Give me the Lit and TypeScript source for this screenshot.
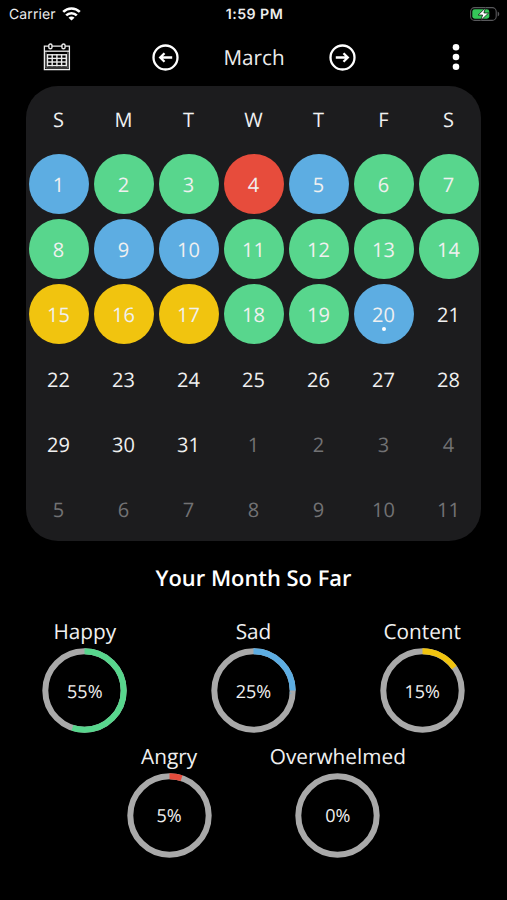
import { LitElement, html, svg, css, nothing } from "lit";
import { customElement, property } from "lit/decorators.js";
import { classMap } from "lit/directives/class-map.js";

type Mood = "happy" | "sad" | "content" | "angry" | "overwhelmed";

const WEEKDAYS = ["S", "M", "T", "W", "T", "F", "S"];
const TODAY = 20;
const DAYS_IN_MONTH = 31;
const MOODS: Mood[] = [
  "sad", "happy", "happy", "angry", "sad", "happy", "happy",
  "happy", "sad", "sad", "happy", "happy", "happy", "happy",
  "content", "content", "content", "happy", "happy", "sad",
];
const SUMMARY: { label: string; mood: Mood; percent: number }[][] = [
  [
    { label: "Happy", mood: "happy", percent: 55 },
    { label: "Sad", mood: "sad", percent: 25 },
    { label: "Content", mood: "content", percent: 15 },
  ],
  [
    { label: "Angry", mood: "angry", percent: 5 },
    { label: "Overwhelmed", mood: "overwhelmed", percent: 0 },
  ],
];

@customElement("status-bar")
class StatusBar extends LitElement {
  static styles = css`
    :host {
      display: grid;
      grid-template-columns: 1fr auto 1fr;
      align-items: center;
      height: 27px;
      padding: 0 7px 0 9px;
      box-sizing: border-box;
      font-family: Inter, "Liberation Sans", sans-serif;
      font-size: 14px;
      line-height: 27px;
      color: #ececec;
    }
    .carrier { display: flex; align-items: center; gap: 6px; letter-spacing: 0.1px; }
    .carrier span, .time { line-height: 26px; padding-top: 2px; }
    .time { font-size: 14.2px; font-weight: 600; letter-spacing: 0.45px; }
    .battery { justify-self: end; }
    svg { display: block; }
  `;
  render() {
    return html`
      <div class="carrier">
        <span>Carrier</span>
        <svg width="19" height="14" viewBox="0 0 19 14" fill="none" stroke="#fff" stroke-width="2.6">
          <path d="M1.2 4.9a11.8 11.8 0 0 1 16.6 0" />
          <path d="M4.2 8.4a7.5 7.5 0 0 1 10.6 0" />
          <path d="M9.5 13.6L6.5 10.8a4.2 4.2 0 0 1 6 0z" fill="#fff" stroke="none" />
        </svg>
      </div>
      <div class="time">1:59 PM</div>
      <svg class="battery" width="30" height="14" viewBox="0 0 30 14">
        <rect x="0.6" y="0.6" width="25.6" height="12.8" rx="4" fill="none" stroke="#59595c" stroke-width="1.1" />
        <rect x="2.3" y="2.3" width="17" height="9.4" rx="2.4" fill="#35c759" />
        <path d="M27.7 4.6a2.6 2.6 0 0 1 0 4.8z" fill="#59595c" />
        <path d="M15.4 0.9L8.2 8h4.4l-1.8 5.4L18.6 6h-4.7z" fill="#fff" stroke="#000" stroke-width="0.7" />
      </svg>
    `;
  }
}

@customElement("month-header")
class MonthHeader extends LitElement {
  static styles = css`
    :host {
      display: grid;
      grid-template-columns: 102px 1fr 102px;
      align-items: center;
      height: 59px;
      padding-top: 1px;
      box-sizing: border-box;
      color: #fff;
    }
    .side { display: flex; justify-content: center; }
    .left { padding-left: 11px; }
    .picker { display: flex; align-items: center; justify-content: center; gap: 44.5px; padding-left: 1px; }
    .month { font-size: 20.7px; line-height: 30px; padding-top: 1px; color: #ededed; }
    svg { display: block; }
  `;
  render() {
    const lines = [0, 1, 2, 3, 4].map((i) => svg`<path d="M${4.5 + i * 4.7} 11.3v12" />`);
    const rows = [0, 1, 2, 3].map((i) => svg`<path d="M3.9 ${11.8 + i * 3.6}h20" />`);
    return html`
      <div class="side left">
        <svg width="28" height="28" viewBox="0 0 28 28" fill="none" stroke="#ececec">
          <path d="M5.7 3.1H1.4v23.5h25V3.1h-4.2M8.8 3.1h10.4" stroke-width="1.3" />
          <path d="M1.4 8.2h25" stroke-width="1.3" />
          <path d="M2.9 9v16h22V9" stroke-width="0.8" stroke="#8a8a8a" />
          <rect x="5.8" y="1" width="3.2" height="4.8" rx="1.6" stroke-width="1.4" />
          <rect x="18.9" y="1" width="3.2" height="4.8" rx="1.6" stroke-width="1.4" />
          <g stroke-width="1.4">${lines}${rows}</g>
        </svg>
      </div>
      <div class="picker">
        <svg width="27" height="27" viewBox="0 0 27 27" fill="none" stroke="#fff" stroke-width="2.3">
          <circle cx="13.5" cy="13.5" r="12" />
          <path d="M20.2 13.5H8.6M12.5 9.2L8.2 13.5l4.3 4.3" />
        </svg>
        <span class="month">March</span>
        <svg width="27" height="27" viewBox="0 0 27 27" fill="none" stroke="#fff" stroke-width="2.3">
          <circle cx="13.5" cy="13.5" r="12" />
          <path d="M6.8 13.5h11.6M14.5 9.2l4.3 4.3-4.3 4.3" />
        </svg>
      </div>
      <div class="side">
        <svg width="8" height="28" viewBox="0 0 8 28" fill="#fff">
          <circle cx="4" cy="4.2" r="3.3" />
          <circle cx="4" cy="14" r="3.3" />
          <circle cx="4" cy="23.7" r="3.3" />
        </svg>
      </div>
    `;
  }
}

@customElement("mood-calendar")
class MoodCalendar extends LitElement {
  static styles = css`
    :host {
      display: grid;
      grid-template-columns: repeat(7, 65px);
      grid-auto-rows: 65.07px;
      width: 455px;
      border-radius: 32px;
      background: #1c1c1e;
      color: #f0f0f0;
      font-size: 20px;
      line-height: 28px;
    }
    .cell { display: flex; align-items: center; justify-content: center; }
    .weekday { padding-top: 2px; }
    .day {
      position: relative;
      display: flex;
      align-items: center;
      justify-content: center;
      width: 60px;
      height: 60px;
      padding-top: 2px;
      box-sizing: border-box;
      border-radius: 50%;
    }
    .happy { background: #58d68d; }
    .sad { background: #5dade2; }
    .content { background: #f1c40f; }
    .angry { background: #e74c3c; }
    .outside { color: #727274; }
    .today::after {
      content: "";
      position: absolute;
      left: 28px;
      bottom: 13px;
      width: 4px;
      height: 4px;
      border-radius: 50%;
      background: #fff;
    }
  `;
  render() {
    const cells = Array.from({ length: 42 }, (_, i) => {
      const day = i + 1;
      const mood = MOODS[i];
      const classes: Record<string, boolean> = {
        day: true,
        outside: day > DAYS_IN_MONTH,
        today: day === TODAY,
      };
      if (mood) classes[mood] = true;
      const shown = day > DAYS_IN_MONTH ? day - DAYS_IN_MONTH : day;
      return html`<div class="cell"><div class=${classMap(classes)}>${shown}</div></div>`;
    });
    return html`${WEEKDAYS.map((d) => html`<div class="cell weekday">${d}</div>`)}${cells}`;
  }
}

@customElement("mood-ring")
class MoodRing extends LitElement {
  @property() label = "";
  @property() mood: Mood = "happy";
  @property({ type: Number }) percent = 0;

  static styles = css`
    :host { display: flex; flex-direction: column; align-items: center; width: 168.7px; color: #f0f0f0; }
    .label { font-size: 20.8px; line-height: 30px; }
    .ring { display: grid; place-items: center; width: 85px; height: 85px; margin-top: 1px; }
    .ring > * { grid-area: 1 / 1; }
    .value { font-size: 18px; line-height: 26px; padding-top: 2px; }
    svg { display: block; }
    .track { stroke: #a9a9a9; }
    .happy { stroke: #58d68d; }
    .sad { stroke: #5dade2; }
    .content { stroke: #f1c40f; }
    .angry { stroke: #e74c3c; }
  `;
  render() {
    const arc = svg`<circle class=${this.mood} cx="42.5" cy="42.5" r="39.2" pathLength="100"
      stroke-dasharray="${this.percent} 100" transform="rotate(-90 42.5 42.5)" />`;
    return html`
      <div class="label">${this.label}</div>
      <div class="ring">
        <svg width="85" height="85" viewBox="0 0 85 85" fill="none" stroke-width="6">
          <circle class="track" cx="42.5" cy="42.5" r="39.2" />
          ${this.percent > 0 ? arc : nothing}
        </svg>
        <span class="value">${this.percent}%</span>
      </div>
    `;
  }
}

@customElement("app-root")
class AppRoot extends LitElement {
  static styles = css`
    :host {
      display: flex;
      flex-direction: column;
      height: 900px;
      overflow: hidden;
      background: #000;
      font-family: "Open Sans", "Noto Sans", sans-serif;
      text-rendering: geometricPrecision;
    }
    mood-calendar { align-self: center; }
    .title {
      margin: 22px 0 21.7px;
      font-size: 21.9px;
      font-weight: 600;
      line-height: 32px;
      text-align: center;
      color: #fff;
    }
    .rings { display: flex; justify-content: center; margin-bottom: 8.6px; }
  `;
  render() {
    return html`
      <status-bar></status-bar>
      <month-header></month-header>
      <mood-calendar></mood-calendar>
      <div class="title">Your Month So Far</div>
      ${SUMMARY.map(
        (row) => html`<div class="rings">
          ${row.map((r) => html`<mood-ring .label=${r.label} .mood=${r.mood} .percent=${r.percent}></mood-ring>`)}
        </div>`
      )}
    `;
  }
}
